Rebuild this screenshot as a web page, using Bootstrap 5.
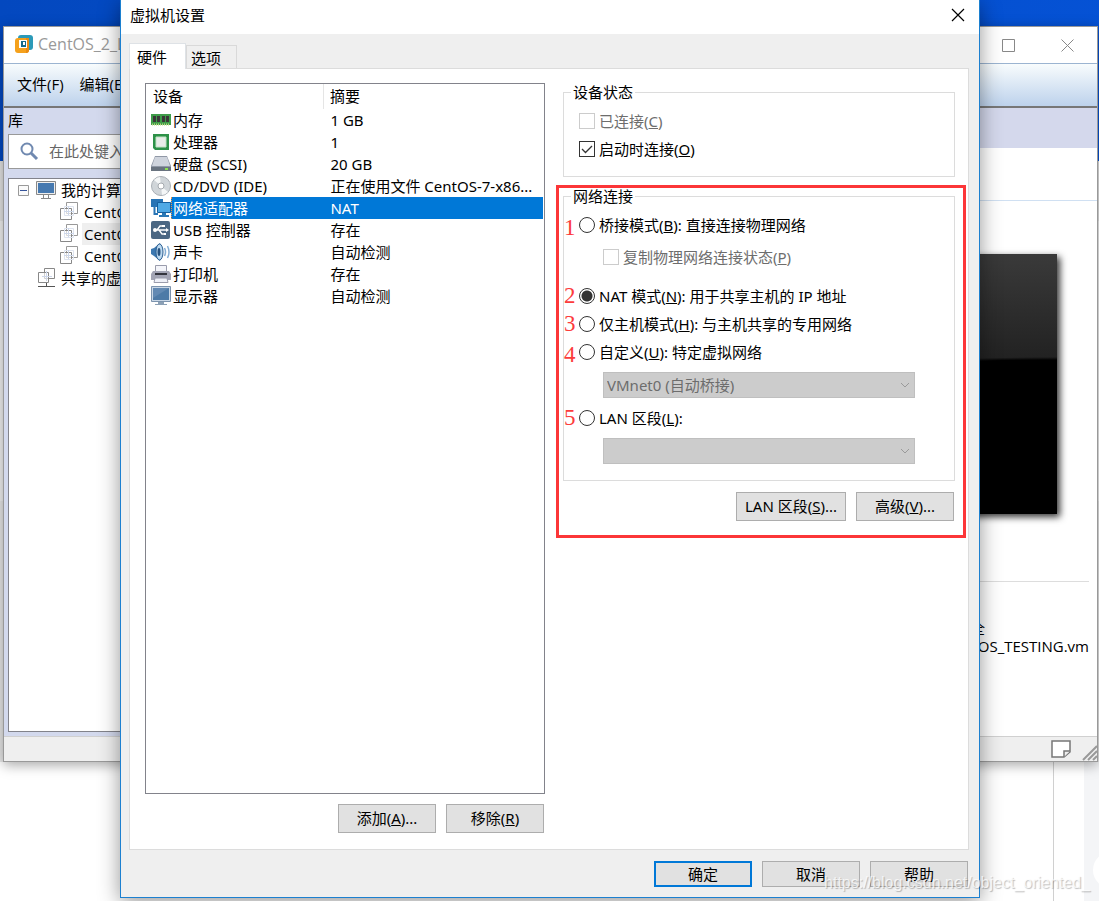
<!DOCTYPE html>
<html lang="zh-CN">
<head>
<meta charset="utf-8">
<meta name="viewport" content="width=device-width, initial-scale=1">
<title>虚拟机设置</title>
<link href="https://cdn.jsdelivr.net/npm/bootstrap@5.3.0/dist/css/bootstrap.min.css" rel="stylesheet">
<script src="https://cdn.jsdelivr.net/npm/bootstrap@5.3.0/dist/js/bootstrap.bundle.min.js"></script>
<style>
  body { font: 15px/22px "Noto Sans", "Noto Sans CJK SC", sans-serif; color: #000; background: #fff; }
  .desktop { background: linear-gradient(100deg, #0348bf, #0552d5) top / 100% 161px no-repeat, #fff; }
  .page-rail { right: 0; top: 762px; bottom: 0; width: 46px; border-left: 1px solid #d0d0d0; background: linear-gradient(to right, #fff 30px, #f4f5f7 30px); }
  .page-rail i { position: absolute; right: -30px; top: 90px; width: 36px; height: 36px; border-radius: 50%; background: #fff; }
  .page-edge { inset: 161px 0 139px 0; background: linear-gradient(#e4e4e4 60px, #f1f1f1 60px 340px, #e8e8e8 340px); }

  /* main application window */
  .app-window { inset: 26px 1px 139px 3px; border: 1px solid #999; background: #fff; box-shadow: 0 3px 12px rgba(0,0,0,.35); font-family: "Open Sans", "Noto Sans CJK SC", sans-serif; }
  .app-title { height: 36px; color: #999; font-size: 16px; padding: 0 0 2px 10px; }
  .app-title .caption-btn { width: 59px; }
  .caption-btn { background: none; border: 0; padding: 0; color: #888; }
  .app-menu { height: 45px; border-top: 1px solid #9bb4d1; border-bottom: 2px solid #777; background: linear-gradient(#f8fcfd, #bdd2ec); padding: 0 0 2px 13px; }
  .app-menu a { color: #000; text-decoration: none; }
  .library { width: 260px; background: #d3d9ed; padding: 1px 4px 4px; }
  .library > label { height: 25px; line-height: 22px; }
  .search-box { height: 35px; border: 1px solid #999; background: #fff; padding: 0 0 2px 10px; }
  .search-box input { border: 0; background: none; font-size: 15px; color: #555; }
  .search-box input::placeholder { color: #666; }
  .tree { border: 1px solid #82838b; background: #fff; padding: 0; margin-top: 9px; }
  .tree li > span { height: 22px; }
  .tree .vm { padding-left: 50px; }
  .tree .vm b { font-weight: 400; padding-left: 2px; margin-left: 3px; }
  .tree .current b { background: #efefef; }
  .vm-band { height: 40px; background: #d4d8ec; }
  .vm-head { height: 53px; border-bottom: 1px solid #d0e0f2; }
  .vm-screen { height: 260px; margin: 53px 40px 0 0; background: radial-gradient(ellipse 900px 300px at 100% 403px, #000 99%, transparent 100%), linear-gradient(#3a3a3a, #222 40%); box-shadow: 3px 3px 7px rgba(0,0,0,.8); }
  .vm-info { margin: 67px 8px 0 0; border-top: 1px solid #ddd; padding-top: 37px; line-height: 18px; }
  .vm-info .config { padding-right: 104px; }
  .app-status { height: 25px; background: #efefef; border-top: 1px solid #d0d0d0; }

  /* settings dialog */
  .settings { inset: 0 119px 3px 120px; border: 1px solid #1c80d0; border-top: 0; background: #efefef; box-shadow: 0 4px 20px rgba(0,0,0,.42); }
  .settings-title { height: 34px; background: #fff; padding: 0 14px 4px 9px; }
  .tab-strip { padding: 9px 8px 0; height: 34px; margin-bottom: 0; }
  .tab-strip .nav-link { border: 1px solid #d9d9d9; border-bottom: 0; border-radius: 0; color: #000; background: #efefef; padding: 0 15px 0 4px; height: 24px; line-height: 22px; margin: 0; }
  .tab-strip .nav-link.active { background: #fff; color: #000; height: 26px; line-height: 22px; padding: 0 18px 0 7px; z-index: 1; position: relative; }
  .tab-strip.nav-tabs { border: 0; align-items: flex-end; }
  .tab-panel { margin: 0 10px 0 8px; border: 1px solid #dcdcdc; background: #fff; padding: 14px 2px 16px 15px; column-gap: 11px; }
  .col-left { flex: 400 1 0; }
  .col-right { flex: 410 1 0; padding-top: 1px; }
  .device-box { border: 1px solid #82838b; padding-right: 1px; }
  .device-box th { font-weight: 400; height: 25px; padding: 0 7px; line-height: 25px; }
  .device-box td { height: 22px; padding: 0 0 0 7px; line-height: 22px; }
  .device-box td:first-child { padding: 0 0 0 5px; }
  .device-box th + th { border-left: 1px solid #e5e5e5; padding-left: 6px; }
  .device-box .dev-name { padding-left: 2px; }
  .device-box .chosen .dev-name, .device-box .chosen td + td { background: #0078d7; color: #fff; }
  .device-box .chosen .dev-name { border-left: 1px dotted #e8924a; padding-left: 1px; }
  .button-row { column-gap: 10px; }
  .col-left .button-row { padding: 10px 1px 0 0; }
  .marked .button-row { padding-top: 11px; padding-right: 1px; }
  .push { min-width: 98px; height: 29px; border: 1px solid #adadad; background: #e1e1e1; color: #000; padding: 0 6px; line-height: 25px; }
  .push.wide { min-width: 110px; }
  .push.low { height: 26px; line-height: 22px; }
  .push.primary { border: 2px solid #0078d7; line-height: 20px; }
  .group-box { border: 1px solid #dcdcdc; padding: 7px 0 14px; }
  .group-box legend { float: none; width: auto; font-size: 15px; line-height: 16px; margin: 0 0 0 7px; padding: 0 2px; }
  .state-box { margin: 0 11px 0 7px; padding-bottom: 13px; }
  .opt { height: 28px; }
  .opt input { appearance: none; width: 16px; height: 16px; margin: 0 4px 0 0; border: 1px solid #333; background: #fff; flex: none; }
  .opt input[type=radio] { border-radius: 50%; }
  .opt input[type=radio]:checked { background: radial-gradient(#333 5px, #fff 6px); }
  .opt input[type=checkbox]:checked { background: #fff url("data:image/svg+xml,%3Csvg xmlns='http://www.w3.org/2000/svg' viewBox='0 0 14 14'%3E%3Cpath d='M2 7l3.500 3.500L12 4' fill='none' stroke='%23333' stroke-width='1.300'/%3E%3C/svg%3E") center / 14px; }
  .opt input:disabled { border-color: #ccc; }
  .opt input:disabled + label { color: #6d6d6d; }
  .opt .num { width: 15px; flex: none; font: 23px/22px "Liberation Serif", serif; color: #fc3c3c; }
  .sub-opt { margin: 4px 0 11px 24px; }
  .status-opts { padding-left: 15px; }
  .marked { border: 3px solid #fc3638; margin-top: 8px; padding: 0 8px 14px 4px; }
  .marked .group-box { padding-bottom: 14px; }
  .pick { display: block; height: 26px; border: 1px solid #bfbfbf; border-radius: 0; color: #6d6d6d; padding: 0 3px; appearance: none; opacity: 1; margin: 6px 39px; width: calc(100% - 78px);
    background: #ccc url("data:image/svg+xml,%3Csvg xmlns='http://www.w3.org/2000/svg' viewBox='0 0 10 6'%3E%3Cpath d='M1 1l4 4 4-4' fill='none' stroke='%239a9a9a'/%3E%3C/svg%3E") right 4px center / 10px 6px no-repeat; }
  .pick.last { margin-bottom: 2px; }
  .settings-foot { padding: 11px 11px 10px; column-gap: 10px; }
  .watermark { right: 9px; bottom: 8px; font: 16px/20px "Liberation Sans", sans-serif; color: rgba(255,255,255,.75); text-shadow: 1px 1px 1px rgba(0,0,0,.25); pointer-events: none; }
</style>
</head>
<body>
<svg class="d-none">
  <symbol id="vm" viewBox="0 0 20 20"><g fill="#fff" stroke="#888"><path d="M7.500 1.500h11v11h-11z" stroke="#999"/><path d="M1.500 7.500h11v11h-11z" fill-opacity=".6"/><path d="M5.500 5.500h9v9h-9z" fill="none" stroke="#dde3ef"/><path d="M9.500 5v9M5 10.500h10" stroke="#cdd7ea"/></g></symbol>
</svg>
<div class="desktop position-relative vh-100 overflow-hidden">
  <div class="page-edge position-absolute"></div>
  <div class="page-rail position-absolute overflow-hidden"><i></i></div>

  <div class="app-window position-absolute d-flex flex-column">
    <header class="app-title d-flex align-items-center flex-shrink-0">
      <svg width="20" height="20" viewBox="0 0 20 20"><rect x="4" y="1" width="15" height="15" rx="3" fill="#2c9ab8"/><path d="M1 7q0-3 3-3h11v12q0 3-3 3H4q-3 0-3-3z" fill="#f5a11c"/><path d="M12 4h3v12q0 3-3 3v-4z" fill="#ea8a12"/><rect x="5" y="6" width="8" height="8" fill="#fff"/><path d="M7 7h5v6H7z" fill="#176b8c"/><path d="M9 8h2v3H9z" fill="#fff"/></svg>
      <span class="ms-1 me-auto">CentOS_2_LAN</span>
      <button class="caption-btn" aria-label="最大化"><svg width="13" height="13" viewBox="0 0 13 13"><path d="M.5.500h12v12H.5z" fill="none" stroke="currentColor"/></svg></button>
      <button class="caption-btn" aria-label="关闭"><svg width="13" height="13" viewBox="0 0 13 13"><path d="M.5.500l12 12M12.500.500l-12 12" stroke="currentColor"/></svg></button>
    </header>
    <nav class="app-menu d-flex align-items-center gap-3 flex-shrink-0"><a href="#">文件(F)</a><a href="#">编辑(E)</a></nav>
    <div class="d-flex flex-grow-1 overflow-hidden">
      <aside class="library d-flex flex-column flex-shrink-0">
        <label for="find">库</label>
        <div class="search-box d-flex align-items-center flex-shrink-0">
          <svg width="20" height="20" viewBox="0 0 20 20" fill="none" stroke="#7089b0"><circle cx="8" cy="8" r="5.500" stroke-width="2"/><path d="M12 12l6 6" stroke-width="3"/></svg>
          <input id="find" class="w-75 ms-2" placeholder="在此处键入内容进行搜索">
        </div>
        <ul class="tree list-unstyled flex-grow-1 mb-0">
          <li><span class="d-flex align-items-center ps-2"><svg width="44" height="20" viewBox="0 0 44 20"><path d="M1.500 5.500h10v10h-10z" fill="#fafafa" stroke="#999"/><path d="M3 10.500h7" stroke="#36549a"/><path d="M19.500 1.500h19v13h-19z" fill="#eee" stroke="#888"/><path d="M21 3h16v10H21z" fill="#4679b0"/><path d="M26.500 15v3M31.500 15v3M24 18.500h10" stroke="#888"/></svg><b class="fw-normal">我的计算机</b></span>
            <ul class="list-unstyled">
              <li><span class="vm d-flex"><svg width="20" height="20"><use href="#vm"/></svg><b class="flex-grow-1">CentOS_1</b></span></li>
              <li><span class="vm current d-flex"><svg width="20" height="20"><use href="#vm"/></svg><b class="flex-grow-1">CentOS_2_LAN</b></span></li>
              <li><span class="vm d-flex"><svg width="20" height="20"><use href="#vm"/></svg><b class="flex-grow-1">CentOS_3</b></span></li>
            </ul></li>
          <li><span class="d-flex align-items-center ps-4"><svg class="ms-1" width="20" height="22" viewBox="0 0 20 22"><g fill="#fff" stroke="#888"><path d="M7.500 1.500h10v10h-10z"/><path d="M1.500 5.500h10v10h-10z" fill-opacity=".6"/><path d="M9.500 4v10M5 9.500h10" stroke="#cdd7ea"/><path d="M1 19.500h17M9.500 16v4" stroke="#555"/></g></svg><b class="fw-normal ms-1">共享的虚拟机</b></span></li>
        </ul>
      </aside>
      <main class="flex-grow-1">
        <div class="vm-band"></div>
        <div class="vm-head"></div>
        <div class="vm-screen"></div>
        <div class="vm-info text-end"><div class="config">配置文件: 安全</div>D:\CentOS_TESTING.vm</div>
      </main>
    </div>
    <footer class="app-status d-flex justify-content-end flex-shrink-0">
      <svg width="47" height="24" viewBox="0 0 47 24"><path d="M2 4h18v11l-6 5H2z" fill="#fff" stroke="#777" stroke-width="1.500"/><path d="M14 20v-6h6" fill="#eee" stroke="#777" stroke-width="1.500"/><path d="M33 23l14-14M38 23l9-9M43 23l4-4" stroke="#999" stroke-width="2"/></svg>
    </footer>
  </div>

  <section class="settings position-absolute d-flex flex-column" role="dialog" aria-label="虚拟机设置">
    <header class="settings-title d-flex align-items-center justify-content-between flex-shrink-0">
      <span>虚拟机设置</span>
      <button class="caption-btn text-black d-flex" aria-label="关闭"><svg width="14" height="14" viewBox="0 0 14 14"><path d="M1 1l12 12M13 1L1 13" stroke="currentColor" stroke-width="1.200"/></svg></button>
    </header>
    <div class="tab-strip nav nav-tabs flex-shrink-0">
      <button class="nav-link active">硬件</button>
      <button class="nav-link">选项</button>
    </div>
    <div class="tab-panel d-flex flex-grow-1">
      <div class="col-left d-flex flex-column">
        <div class="device-box flex-grow-1">
          <table class="w-100">
            <colgroup><col style="width:44.700%"><col></colgroup>
            <thead><tr><th>设备</th><th>摘要</th></tr></thead>
            <tbody>
              <tr><td><div class="d-flex"><svg width="20" height="22" viewBox="0 0 20 22"><path d="M0 5h20v11H0z" fill="#3f9c4a"/><path d="M2 7h3v6H2zm4 0h3v6H6zm5 0h3v6h-3zm4 0h3v6h-3z" fill="#3a3838"/><path d="M1 15.500h18" stroke="#b9d680" stroke-dasharray="1 1" stroke-width="2"/></svg><span class="dev-name flex-grow-1">内存</span></div></td><td>1 GB</td></tr>
              <tr><td><div class="d-flex"><svg width="20" height="22" viewBox="0 0 20 22"><path d="M2 3h16v16H4l-2-2z" fill="#2d9148"/><path d="M5 6h10v10H5z" fill="#e9ece9" stroke="#c2e2c5"/></svg><span class="dev-name flex-grow-1">处理器</span></div></td><td>1</td></tr>
              <tr><td><div class="d-flex"><svg width="20" height="22" viewBox="0 0 20 22"><path d="M4 3h12l4 10v5H0v-5z" fill="#9098a6"/><path d="M4 4h12l3 9H1z" fill="#cfd4dd"/><path d="M0 14h20v4H0z" fill="#69737f"/><path d="M14 15h3v2h-3z" fill="#8be24f"/></svg><span class="dev-name flex-grow-1">硬盘 (SCSI)</span></div></td><td>20 GB</td></tr>
              <tr><td><div class="d-flex"><svg width="20" height="22" viewBox="0 0 20 22"><circle cx="10" cy="11" r="9.500" fill="#d0d5d9" stroke="#a9afb5"/><path d="M10 11L3 5a9 9 0 0 1 6-3zM10 11l7 6a9 9 0 0 1-6 3z" fill="#f4f6f7"/><circle cx="10" cy="11" r="3" fill="#fff" stroke="#a5aaaf"/></svg><span class="dev-name flex-grow-1">CD/DVD (IDE)</span></div></td><td>正在使用文件 CentOS-7-x86...</td></tr>
              <tr class="chosen"><td><div class="d-flex"><svg width="20" height="22" viewBox="0 0 20 22"><path d="M0 2h12v8H0z" fill="#2874b5"/><path d="M3.500 10v7H7" fill="none" stroke="#2874b5" stroke-width="2"/><path d="M6.500 5.500h13v10h-13z" fill="#4fa9e5" stroke="#17609e"/><path d="M11 16h4v2h3v2H8v-2h3z" fill="#2b78b5"/></svg><span class="dev-name flex-grow-1">网络适配器</span></div></td><td>NAT</td></tr>
              <tr><td><div class="d-flex"><svg width="20" height="22" viewBox="0 0 20 22"><rect y="2" width="19" height="18" rx="2" fill="#4b6783"/><g fill="none" stroke="#fff" stroke-width="1.300"><path d="M3 11h13M6 11l3-4h3M8 11l3 4h3"/></g><circle cx="4" cy="11" r="2" fill="#fff"/><path d="M15 9l3 2-3 2zM11 6h3v2h-3zM13 14h2v2h-2z" fill="#fff"/></svg><span class="dev-name flex-grow-1">USB 控制器</span></div></td><td>存在</td></tr>
              <tr><td><div class="d-flex"><svg width="20" height="22" viewBox="0 0 20 22"><path d="M0 8l3-1 6-5q4 9 0 18l-6-5-3-2z" fill="#3c78b0"/><ellipse cx="8.500" cy="11" rx="3.500" ry="8" fill="#bcd9f0" stroke="#2a5d90"/><ellipse cx="8" cy="11" rx="1.500" ry="4" fill="#28527e"/><path d="M13.500 7q2 4 0 8M16.500 5q3 6 0 12" fill="none" stroke="#85aed4" stroke-width="1.500"/></svg><span class="dev-name flex-grow-1">声卡</span></div></td><td>自动检测</td></tr>
              <tr><td><div class="d-flex"><svg width="20" height="22" viewBox="0 0 20 22"><path d="M4.500 2.500h11V9h-11z" fill="#f4f5fa" stroke="#9a9cac"/><path d="M2 8h16l2 3v6H0v-6z" fill="#a3a5b5"/><path d="M4 10h12v2H4z" fill="#33343d"/><path d="M4 15h12l1 4.500H3z" fill="#eef0f8" stroke="#9a9cac"/></svg><span class="dev-name flex-grow-1">打印机</span></div></td><td>存在</td></tr>
              <tr><td><div class="d-flex"><svg width="20" height="22" viewBox="0 0 20 22"><path d="M.5 1.500h19v15H.5z" fill="#c9d7e6" stroke="#7c93ad"/><path d="M2 3h16v12H2z" fill="#4d7aa7"/><path d="M2 3h16L2 13z" fill="#6289b3"/><path d="M7 17h6v2h3v1H4v-1h3z" fill="#8ba0b5"/></svg><span class="dev-name flex-grow-1">显示器</span></div></td><td>自动检测</td></tr>
            </tbody>
          </table>
        </div>
        <div class="button-row d-flex justify-content-end">
          <button class="push">添加(<u>A</u>)...</button>
          <button class="push">移除(<u>R</u>)</button>
        </div>
      </div>
      <div class="col-right">
        <fieldset class="group-box state-box">
          <legend>设备状态</legend>
          <div class="status-opts">
            <div class="opt d-flex align-items-center"><input type="checkbox" id="linked" disabled><label for="linked">已连接(<u>C</u>)</label></div>
            <div class="opt d-flex align-items-center"><input type="checkbox" id="onboot" checked><label for="onboot">启动时连接(<u>O</u>)</label></div>
          </div>
        </fieldset>
        <div class="marked">
          <fieldset class="group-box">
            <legend>网络连接</legend>
            <div class="opt d-flex align-items-center"><span class="num align-self-end">1</span><input type="radio" name="net" id="bridge"><label for="bridge">桥接模式(<u>B</u>): 直接连接物理网络</label></div>
            <div class="opt sub-opt d-flex align-items-center"><span class="num"></span><input type="checkbox" id="copy" disabled><label for="copy">复制物理网络连接状态(<u>P</u>)</label></div>
            <div class="opt d-flex align-items-center"><span class="num">2</span><input type="radio" name="net" id="nat" checked><label for="nat">NAT 模式(<u>N</u>): 用于共享主机的 IP 地址</label></div>
            <div class="opt d-flex align-items-center"><span class="num">3</span><input type="radio" name="net" id="host"><label for="host">仅主机模式(<u>H</u>): 与主机共享的专用网络</label></div>
            <div class="opt d-flex align-items-center"><span class="num align-self-end">4</span><input type="radio" name="net" id="custom"><label for="custom">自定义(<u>U</u>): 特定虚拟网络</label></div>
            <select class="pick" aria-label="特定虚拟网络" disabled><option>VMnet0 (自动桥接)</option></select>
            <div class="opt d-flex align-items-center"><span class="num">5</span><input type="radio" name="net" id="lan"><label for="lan">LAN 区段(<u>L</u>):</label></div>
            <select class="pick last" aria-label="LAN 区段" disabled><option></option></select>
          </fieldset>
          <div class="button-row d-flex justify-content-end">
            <button class="push wide">LAN 区段(<u>S</u>)...</button>
            <button class="push">高级(<u>V</u>)...</button>
          </div>
        </div>
      </div>
    </div>
    <footer class="settings-foot d-flex justify-content-end flex-shrink-0">
      <button class="push low primary">确定</button>
      <button class="push low">取消</button>
      <button class="push low">帮助</button>
    </footer>
  </section>
  <div class="watermark position-absolute">https://blog.csdn.net/object_oriented_</div>
</div>
</body>
</html>
